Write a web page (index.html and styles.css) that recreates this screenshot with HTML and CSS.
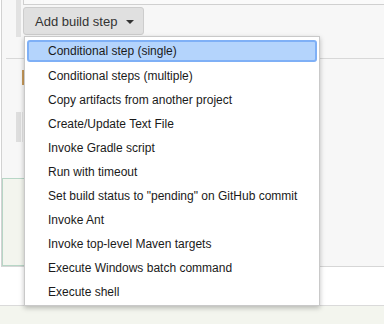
FILE: index.html
```html
<!DOCTYPE html>
<html>
<head>
<meta charset="utf-8">
<link rel="stylesheet" href="styles.css">
</head>
<body>
<div class="frame">
  <div class="main">
    <div class="sec-a">
      <div class="gutter"><div class="bar"></div></div>
      <div class="content">
        <div class="stub"></div>
        <button class="btn">Add build step <span class="caret"></span></button>
      </div>
    </div>
    <div class="sec-b">
      <div class="orange"></div>
      <div class="gbar"></div>
      <div class="thin"></div>
    </div>
    <div class="sec-c"></div>
  </div>
  <div class="band"></div>
  <div class="footer"></div>
</div>
<ul class="menu">
  <li class="item active">Conditional step (single)</li>
  <li class="item">Conditional steps (multiple)</li>
  <li class="item">Copy artifacts from another project</li>
  <li class="item">Create/Update Text File</li>
  <li class="item">Invoke Gradle script</li>
  <li class="item">Run with timeout</li>
  <li class="item">Set build status to "pending" on GitHub commit</li>
  <li class="item">Invoke Ant</li>
  <li class="item">Invoke top-level Maven targets</li>
  <li class="item">Execute Windows batch command</li>
  <li class="item">Execute shell</li>
</ul>
</body>
</html>
```
FILE: styles.css
```css
html, body {
  margin: 0;
  padding: 0;
  background: #fff;
  font-family: "Liberation Sans", Arial, sans-serif;
}
body {
  position: relative;
  width: 384px;
  height: 324px;
  overflow: hidden;
}
.frame {
  display: flex;
  flex-direction: column;
  height: 324px;
}
.main {
  margin-left: 1px;
  border-left: 1px solid #d2d2d2;
  border-bottom: 1px solid #d6d6d6;
  background: #f7f7f7;
  display: flex;
  flex-direction: column;
}
.sec-a {
  height: 58px;
  margin-left: 4px;
  border-bottom: 1px solid #d8d8d8;
  display: flex;
}
.gutter {
  width: 17px;
  display: flex;
  justify-content: flex-start;
  padding-left: 10px;
  box-sizing: border-box;
}
.bar {
  width: 5px;
  height: 37px;
  background: #e2e2e2;
}
.content {
  flex: 1;
}
.stub {
  height: 4px;
  border-left: 1px solid #cfcfcf;
  border-bottom: 1px solid #d0d0d0;
  background: #fafafa;
}
.btn {
  margin: 2px 0 0 0;
  height: 28px;
  padding: 0 9px 0 11px;
  border: 1px solid #cdcdcd;
  border-radius: 3px;
  background: #e0e0e0;
  color: #333;
  font-family: "Liberation Sans", Arial, sans-serif;
  font-size: 13px;
  display: flex;
  align-items: center;
  gap: 9px;
  box-sizing: border-box;
}
.caret {
  width: 0;
  height: 0;
  border-left: 4px solid transparent;
  border-right: 4px solid transparent;
  border-top: 4px solid #333;
  margin-top: 1px;
}
.sec-b {
  height: 119px;
  display: grid;
  grid-template-columns: 14px 6px 2px;
  grid-template-rows: 11px 15px 27px 30px;
}
.orange {
  grid-column: 3;
  grid-row: 2;
  width: 2px;
  background: #c79a5a;
}
.gbar {
  grid-column: 2;
  grid-row: 4;
  width: 5px;
  background: #dedede;
}
.thin {
  grid-column: 3;
  grid-row: 4;
  width: 1px;
  background: #e2e2e2;
}
.sec-c {
  height: 88px;
  width: 300px;
  box-sizing: border-box;
  border: 1px solid #b7d6c6;
  background: #f3f5ee;
}
.band {
  height: 38px;
  background: #fff;
  border-bottom: 1px solid #dadada;
}
.footer {
  flex: 1;
  background: #f3f5ee;
}
.menu {
  position: absolute;
  left: 24px;
  top: 36px;
  width: 296px;
  margin: 0;
  padding: 2px 0;
  list-style: none;
  background: #fff;
  border: 1px solid #c9c9c9;
  box-sizing: border-box;
  box-shadow: 0 2px 5px rgba(0, 0, 0, 0.25);
}
.item {
  height: 24px;
  line-height: 26px;
  padding-left: 23px;
  font-size: 12px;
  color: #1a1a1a;
  white-space: nowrap;
}
.item.active {
  height: 22px;
  line-height: 19px;
  margin: 1px 2px;
  padding-left: 19px;
  background: #b4d4fc;
  border: 2px solid #7fb0f6;
  border-radius: 3px;
  box-sizing: border-box;
}
```
